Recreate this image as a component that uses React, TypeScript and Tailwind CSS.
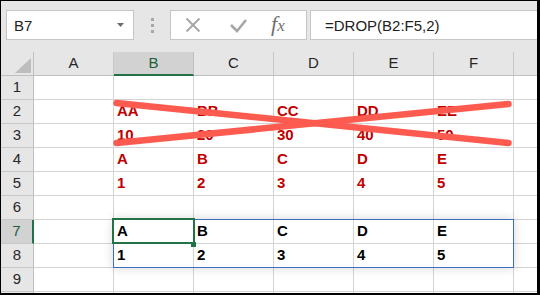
import React from "react";

const COLS = ["A", "B", "C", "D", "E", "F"];

type Row = { n: number; vals: string[]; color: string };

const ROWS: Row[] = [
  { n: 1, vals: ["", "", "", "", ""], color: "" },
  { n: 2, vals: ["AA", "BB", "CC", "DD", "EE"], color: "text-[#c00000]" },
  { n: 3, vals: ["10", "20", "30", "40", "50"], color: "text-[#c00000]" },
  { n: 4, vals: ["A", "B", "C", "D", "E"], color: "text-[#c00000]" },
  { n: 5, vals: ["1", "2", "3", "4", "5"], color: "text-[#c00000]" },
  { n: 6, vals: ["", "", "", "", ""], color: "" },
  { n: 7, vals: ["A", "B", "C", "D", "E"], color: "text-black" },
  { n: 8, vals: ["1", "2", "3", "4", "5"], color: "text-black" },
  { n: 9, vals: ["", "", "", "", ""], color: "" },
];

export default function App() {
  return (
    <div
      className="w-[540px] h-[295px] bg-black pt-px pl-px pr-[3px] pb-[2px]"
      style={{ fontFamily: '"Liberation Sans", Arial, sans-serif' }}
    >
      <div className="w-[536px] h-[292px] bg-white flex flex-col overflow-hidden">
        {/* Formula bar */}
        <div className="h-[51px] shrink-0 bg-[#e6e6e6] flex items-start pt-[9px] pl-[5px]">
          <div className="w-[128px] h-[30px] bg-white border border-[#c6c6c6] flex items-center pl-[7px] pr-[9px]">
            <span className="text-[15px] text-[#222] leading-none flex-1">B7</span>
            <svg width="7" height="4" viewBox="0 0 7 4">
              <polygon points="0,0 7,0 3.5,4" fill="#6b6b6b" />
            </svg>
          </div>
          <div className="w-[36px] h-[30px] flex flex-col items-center justify-center gap-[3px] pt-[1px]">
            <div className="w-[3px] h-[3px] bg-[#a8a8a8]" />
            <div className="w-[3px] h-[3px] bg-[#a8a8a8]" />
            <div className="w-[3px] h-[3px] bg-[#a8a8a8]" />
          </div>
          <div className="w-[137px] h-[30px] bg-white border border-[#c6c6c6] flex items-center">
            <svg width="100" height="28" viewBox="0 0 100 28">
              <line x1="15.5" y1="7.5" x2="28.5" y2="20.5" stroke="#a6a6a6" strokeWidth="2" />
              <line x1="28.5" y1="7.5" x2="15.5" y2="20.5" stroke="#a6a6a6" strokeWidth="2" />
              <polyline
                points="60,14 66,20 75,9"
                fill="none"
                stroke="#a6a6a6"
                strokeWidth="2.6"
              />
            </svg>
            <span
              className="text-[22px] italic text-[#707070] leading-none -mt-[2px]"
              style={{ fontFamily: '"Liberation Serif", "Times New Roman", serif' }}
            >
              f<span className="text-[17px]">x</span>
            </span>
          </div>
          <div className="w-[3px]" />
          <div className="flex-1 h-[30px] bg-white border border-r-0 border-[#c6c6c6] flex items-center pl-[14px]">
            <span className="text-[15px] text-[#222] leading-none">=DROP(B2:F5,2)</span>
          </div>
        </div>

        {/* Grid */}
        <div className="relative flex-1">
          <div className="grid grid-cols-[33px_repeat(6,80px)_23px] grid-rows-[24px_repeat(9,24px)_1px]">
            {/* header row */}
            <div className="bg-[#e6e6e6] border-r border-b border-[#bfbfbf] relative">
              <svg className="absolute left-[14px] top-[6px]" width="16" height="15" viewBox="0 0 16 15">
                <polygon points="16,0 16,15 0,15" fill="#bdbdbd" />
              </svg>
            </div>
            {COLS.map((c) =>
              c === "B" ? (
                <div
                  key={c}
                  className="bg-[#d2d2d2] border-r border-[#bfbfbf] border-b-2 border-b-[#217346] flex items-center justify-center text-[15px] text-[#1e5e3a]"
                >
                  {c}
                </div>
              ) : (
                <div
                  key={c}
                  className="bg-[#e6e6e6] border-r border-b border-[#c8c8c8] border-b-[#bfbfbf] flex items-center justify-center text-[15px] text-[#262626]"
                >
                  {c}
                </div>
              )
            )}
            <div className="bg-[#e6e6e6] border-b border-[#bfbfbf]" />

            {ROWS.map((r) => (
              <React.Fragment key={r.n}>
                {r.n === 7 ? (
                  <div className="bg-[#d2d2d2] border-b border-[#c8c8c8] border-r-2 border-r-[#217346] flex items-center justify-center text-[15px] text-[#1e5e3a]">
                    {r.n}
                  </div>
                ) : (
                  <div className="bg-[#e6e6e6] border-b border-r border-[#c8c8c8] border-r-[#bfbfbf] flex items-center justify-center text-[15px] text-[#262626]">
                    {r.n}
                  </div>
                )}
                <div className="border-r border-b border-[#d4d4d4]" />
                {r.vals.map((v, i) => (
                  <div
                    key={i}
                    className={`border-r border-b border-[#d4d4d4] flex items-center pl-[3px] text-[15px] font-bold ${r.color}`}
                  >
                    {v}
                  </div>
                ))}
                <div className="border-b border-[#d4d4d4]" />
              </React.Fragment>
            ))}
            <div className="bg-[#e6e6e6] border-r border-[#bfbfbf]" />
            <div className="border-r border-[#d4d4d4]" />
            <div className="border-r border-[#d4d4d4]" />
            <div className="border-r border-[#d4d4d4]" />
            <div className="border-r border-[#d4d4d4]" />
            <div className="border-r border-[#d4d4d4]" />
            <div className="border-r border-[#d4d4d4]" />
            <div />
          </div>

          {/* Spill range border */}
          <div className="absolute left-[112px] top-[167px] w-[401px] h-[49px] border border-[#3e6dc0] shadow-[0_0_10px_rgba(0,0,0,0.16)] pointer-events-none" />

          {/* Selected cell */}
          <div className="absolute left-[111px] top-[166px] w-[83px] h-[26px] border-2 border-[#217346] pointer-events-none" />
          <div className="absolute left-[190px] top-[190px] w-[5px] h-[5px] bg-[#217346] pointer-events-none" />

          {/* Red cross */}
          <svg className="absolute left-0 top-0 pointer-events-none" width="536" height="120" viewBox="0 0 536 120">
            <line x1="115.5" y1="51" x2="507.5" y2="91" stroke="#fd5a50" strokeWidth="6.5" strokeLinecap="round" />
            <line x1="115.5" y1="91" x2="507.5" y2="52" stroke="#fd5a50" strokeWidth="6.5" strokeLinecap="round" />
          </svg>
        </div>
      </div>
    </div>
  );
}
